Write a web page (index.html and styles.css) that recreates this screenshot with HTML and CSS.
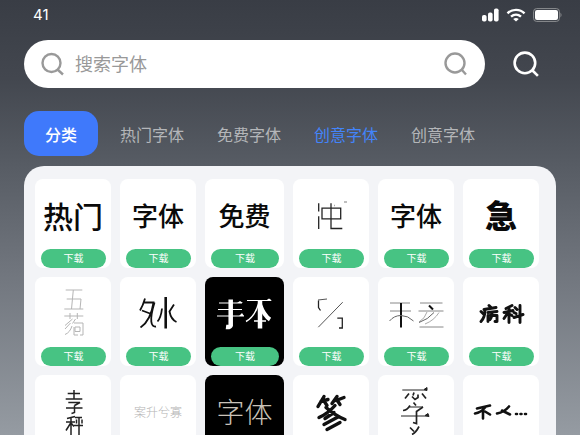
FILE: index.html
```html
<!DOCTYPE html>
<html lang="zh-CN">
<head>
<meta charset="utf-8">
<meta name="viewport" content="width=device-width, initial-scale=1">
<title>字体</title>
<link rel="stylesheet" href="styles.css">
</head>
<body>
<div class="app">
  <header class="status">
    <span>41</span>
    <div class="status-icons">
      <svg width="17" height="14" viewBox="0 0 17 14" fill="#fff"><rect x="0" y="7" width="4.6" height="6.6" rx="1.8"/><rect x="6" y="4.600" width="4.600" height="9" rx="1.800"/><rect x="12" y="0.500" width="4.600" height="13.100" rx="1.800"/></svg>
      <svg width="20" height="14" viewBox="0 0 20 14" fill="none" stroke="#fff" stroke-width="2.400"><path d="M1.500 5.400C6 .7 14 .7 18.500 5.400M5 8.700c3-2.700 7-2.700 10 0"/><path d="M7.200 11Q10 9 12.800 11L10 13.600Z" fill="#fff" stroke="none"/></svg>
      <svg width="30" height="14" viewBox="0 0 30 14"><rect x=".6" y=".6" width="25.800" height="12.800" rx="3" fill="none" stroke="#8d8f92"/><rect x="2" y="2" width="23" height="10" rx="2" fill="#fff"/><path d="M27.500 4.500Q29.500 7 27.500 9.500Z" fill="#8d8f92"/></svg>
    </div>
  </header>

  <form class="search-row">
    <div class="search">
      <svg class="lens" viewBox="0 0 24 24"><circle cx="10.500" cy="11" r="9"/><path d="M16.500 17.500l5.500 5"/></svg>
      <input type="search" aria-label="搜索字体" placeholder="搜索字体">
      <button class="icon-btn" type="button" aria-label="搜索"><svg class="lens" viewBox="0 0 24 24"><circle cx="11" cy="11" r="9.500"/><path d="M17.500 17.500l4.500 5"/></svg></button>
    </div>
    <button class="icon-btn outer" type="submit" aria-label="搜索"><svg class="lens" viewBox="0 0 24 24"><circle cx="11" cy="11" r="9.500"/><path d="M17.500 17.500l5.500 5.500"/></svg></button>
  </form>

  <nav class="tabs">
    <button class="tab main">分类</button>
    <button class="tab">热门字体</button>
    <button class="tab">免费字体</button>
    <button class="tab current">创意字体</button>
    <button class="tab">创意字体</button>
  </nav>

  <main class="panel">
    <article class="card"><div class="art"><span class="word large">热门</span></div><button class="get">下载</button></article>
    <article class="card"><div class="art"><span class="word">字体</span></div><button class="get">下载</button></article>
    <article class="card"><div class="art"><span class="word">免费</span></div><button class="get">下载</button></article>
    <article class="card"><div class="art"><svg viewBox="0 0 76 69" stroke="#222" stroke-width="1.300"><path d="M25.700 23.700V32M25.700 36.700V49.500M29 28.700H47.700V39.300H29ZM38 23.700V49H49.300"/><path d="M51 22.500h3M41 26h1" stroke="#aaa"/></svg></div><button class="get">下载</button></article>
    <article class="card"><div class="art"><span class="word">字体</span></div><button class="get">下载</button></article>
    <article class="card"><div class="art"><span class="word heavy">急</span></div><button class="get">下载</button></article>

    <article class="card"><div class="art"><svg viewBox="0 0 76 69" stroke="#b5b5b5"><path d="M30.700 12.500H47.300M38.300 12.500L36.500 31.500M31.700 21.500H46L45 31.500M29.300 31.500H48.300M29.300 38.500H48.300M35 35.500V41.500M42.300 35.500V41.500M37.500 41.500L30 48M35.500 45.500L30 51.500M37 48.500Q35 55 30 57M40.500 41.500L37.500 46M39 45.500H48V57.500H45M40 49.500H45V54H40ZM39 49.500V57.500H43"/></svg></div><button class="get">下载</button></article>
    <article class="card"><div class="art"><svg viewBox="0 0 76 69" stroke="#111" stroke-width="1.800"><path d="M25 21Q23 28 20 33M23.500 25H33.500C32 35 28 45 20.500 50M22 33L30 36M34.500 25C29 43 31 50 36 49"/><path d="M45.700 19.500V51" stroke-width="2.600"/><path d="M42 31Q41 40 37.500 44M54 27L49.500 34Q51 42 56.500 44.500"/></svg></div><button class="get">下载</button></article>
    <article class="card dark"><div class="art"><svg viewBox="0 0 79 69" stroke="#fff"><path d="M14 25.500H37M13 32H37M12 38.500H39M42 23H66"/><path d="M32 25.500l3-2 3 2zM34 38.500l3-3 2 3zM61 23l3-2 3 2z" fill="#fff" stroke="none"/><path d="M25.700 22V48Q25 50 21 49.500M55 23V51" stroke-width="4.500"/><path d="M54 25Q50 39 41 44" stroke-width="1.500"/><path d="M55 27Q59 38 65 42" stroke-width="4"/><path d="M49 43.500H61" stroke-width="1.500"/></svg></div><button class="get">下载</button></article>
    <article class="card"><div class="art"><svg viewBox="0 0 76 69" stroke="#555"><path d="M49.700 24.700L25.300 49.700M25 22.500L34 21.500"/><path d="M25.500 23V30L27.500 33M44.300 40.700H49.300V50.500H46" stroke="#222" stroke-width="1.300"/></svg></div><button class="get">下载</button></article>
    <article class="card"><div class="art"><svg viewBox="0 0 76 69" stroke="#888"><path d="M12 25.500H32M12 33.500H33M42 25.500H64.500M40.500 33.500H65.500M41.500 49.500H65.500"/><path d="M49 34.500Q47 41 41 44.500M61 35Q56 43 47 46.500" stroke="#aaa"/><path d="M23 25.500V50" stroke="#111" stroke-width="2"/><path d="M11.500 43.500Q16 38 23 38Q30 38 35.500 43.500M41 45Q50 42 56 35" stroke="#666"/><path d="M51 28L55 32" stroke="#111" stroke-width="2"/></svg></div><button class="get">下载</button></article>
    <article class="card"><div class="art"><svg class="brush" viewBox="0 0 76 69" stroke-width="2.900"><path d="M26 28L28 30M21 32L33 30M22 32Q22 40 18 44M18 34L20 36M25 35L34 34M25 38V44M27 38H34V44L32 44M29 35Q29 40 27 42M49 28L43 31M41 35L50 33M46 30V45M45 35L41 41M47 37L49 38M52 30L54 32M51 35L53 36M51 40L60 37M57 28V45"/></svg></div><button class="get">下载</button></article>

    <article class="card"><div class="art"><svg viewBox="0 0 76 69" stroke="#222" stroke-width="1.500"><path d="M39 14.500V23.500M32.700 18H45M30.700 23.500H47.300M33.300 27H45L39.500 30M31 32.500H47.500M39.500 30V37L36.500 38M40 41L32 43M31 46.500H40M36 42V68M36 47L31 55M36.500 48L39 51M40 42H47M39 50H48M44 42V68M41.500 44V48M47 44V48"/></svg></div></article>
    <article class="card"><div class="art"><span class="word tiny">案升兮寡</span></div></article>
    <article class="card dark"><div class="art"><span class="word beige">字体</span></div></article>
    <article class="card"><div class="art"><svg class="brush" viewBox="0 0 76 69" stroke-width="3.400"><path d="M31 21L25 31M28 26L35 24M32 27L34 30M44 21L39 28M43 25L51 22M45 26L47 29M42 30Q35 38 26 42M33 32Q42 40 52 44M41 37L32 43M44 42L31 49M47 47L34 54"/></svg></div></article>
    <article class="card"><div class="art"><svg viewBox="0 0 76 69" stroke="#222"><path d="M24.300 14.500H49M31.500 31.500H45M23 40.500H50.500"/><path d="M31 18L27 23M36 17L35 20M44 18L48 23M34 21L37 24L40 22V19M35.500 27L38 30M32 30Q29 35 25 35M45 31.500L38.500 36V48L35 47M32 52L36 56M41 51Q38 57 34 59" stroke-width="1.700"/><path d="M46 14l3-2v3zM47 40l3-2 1 3z" fill="#222"/></svg></div></article>
    <article class="card"><div class="art"><svg class="brush" viewBox="0 0 76 69" stroke-width="2.600"><path d="M14 33L27 30M22 32Q18 37 12 38M20 35V43M22 36L27 39M46 31Q41 37 34 38M39 35L47 39M53 38.500H54M57.500 38.500H58.500M62 38.500H63"/></svg></div></article>
  </main>
</div>
</body>
</html>
```
FILE: styles.css
```css
* { box-sizing: border-box; }

body {
  margin: 0;
  font-family: Inter, "Noto Sans CJK SC", sans-serif;
}

button, input {
  border: 0;
  padding: 0;
  font: inherit;
  color: inherit;
  background: none;
}

.app {
  height: 100vh;
  overflow: hidden;
  padding: 0 24px;
  background: linear-gradient(#393d45 0%, #43474f 18%, #555a62 36%, #70757d 62%, #959ba2 100%);
}

.status {
  display: flex;
  justify-content: space-between;
  align-items: center;
  height: 40px;
  padding: 0 0 12px 9px;
  margin-right: -7px;
  color: #fff;
  font-size: 15px;
}

.status-icons {
  display: flex;
  gap: 7px;
  padding-top: 2px;
}

.search-row {
  display: flex;
  align-items: center;
  gap: 28px;
  padding-right: 17px;
}

.search {
  flex: 1;
  display: flex;
  align-items: center;
  gap: 10px;
  height: 48px;
  padding: 0 17px;
  border-radius: 24px;
  background: #fff;
  color: #999;
}

.search input {
  flex: 1;
  min-width: 0;
  font-size: 18px;
  outline: 0;
}

.search input::placeholder { color: #999; }

.icon-btn { display: flex; }
.outer { color: #fff; }

.lens {
  width: 24px;
  height: 24px;
  fill: none;
  stroke: currentColor;
  stroke-width: 2.4;
}

.outer .lens {
  width: 26px;
  height: 26px;
}

.tabs {
  display: flex;
  align-items: center;
  gap: 33px;
  margin: 23px 0 10px;
  color: #b4b6b9;
  font-size: 16px;
  white-space: nowrap;
}

.main {
  height: 45px;
  padding: 0 21px;
  margin-right: -11px;
  border-radius: 15px;
  background: #3f79fb;
  color: #fff;
  font-weight: 500;
}

.current { color: #4384fa; }

.panel {
  display: grid;
  grid-template-columns: 76fr 76fr 79fr 76fr 76fr 76fr;
  grid-auto-rows: 89px;
  gap: 9px;
  padding: 13px 17px 13px 11px;
  border-radius: 20px;
  background: #f3f4f7;
}

.card {
  overflow: hidden;
  border-radius: 8px;
  background: #fff;
  color: #0a0a0a;
}

.dark {
  background: #000;
  color: #fff;
}

.art {
  height: 70px;
  display: flex;
  align-items: center;
  justify-content: center;
}

.art svg {
  width: 100%;
  height: 100%;
  fill: none;
}

.brush {
  stroke: #111;
  stroke-linecap: round;
  stroke-linejoin: round;
}

.word {
  padding-top: 6px;
  font-size: 26px;
  font-weight: 500;
  line-height: 32px;
  white-space: nowrap;
}

.large { font-size: 30px; }

.heavy {
  font-size: 32px;
  font-weight: 900;
}

.tiny {
  color: #b4b4b4;
  font-size: 12px;
  font-weight: 300;
}

.beige {
  color: #c9c2b8;
  font-size: 28px;
  font-weight: 300;
}

.get {
  display: block;
  width: calc(100% - 11px);
  height: 19px;
  margin: 0 5px 0 6px;
  border-radius: 10px;
  background: #47c383;
  color: #fff;
  font-size: 10px;
  line-height: 19px;
}
```
